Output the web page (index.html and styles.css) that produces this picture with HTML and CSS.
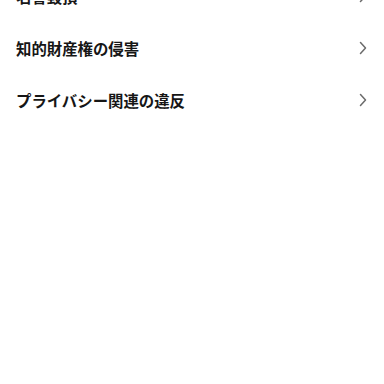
FILE: index.html
```html
<!DOCTYPE html>
<html lang="ja">
<head>
<meta charset="utf-8">
<link rel="stylesheet" href="styles.css">
</head>
<body>
<ul class="list">
  <li class="row"><span class="label">名誉毀損</span><svg class="chev" viewBox="0 0 8 14" width="8" height="14"><path d="M1.5 1.5 L6.5 7 L1.5 12.5" fill="none" stroke="#6b6b6b" stroke-width="1.5" stroke-linecap="round" stroke-linejoin="round"/></svg></li>
  <li class="row"><span class="label">知的財産権の侵害</span><svg class="chev" viewBox="0 0 8 14" width="8" height="14"><path d="M1.5 1.5 L6.5 7 L1.5 12.5" fill="none" stroke="#6b6b6b" stroke-width="1.5" stroke-linecap="round" stroke-linejoin="round"/></svg></li>
  <li class="row"><span class="label">プライバシー関連の違反</span><svg class="chev" viewBox="0 0 8 14" width="8" height="14"><path d="M1.5 1.5 L6.5 7 L1.5 12.5" fill="none" stroke="#6b6b6b" stroke-width="1.5" stroke-linecap="round" stroke-linejoin="round"/></svg></li>
</ul>
</body>
</html>
```
FILE: styles.css
```css
html, body {
  margin: 0;
  padding: 0;
  background: #ffffff;
  width: 384px;
  height: 384px;
  overflow: hidden;
}
.list {
  list-style: none;
  margin: -30px 0 0 0;
  padding: 0;
}
.row {
  height: 52px;
  display: flex;
  align-items: center;
  justify-content: space-between;
  padding: 0 17px 0 16px;
}
.label {
  font-family: "Noto Sans CJK JP", "Noto Sans", sans-serif;
  font-weight: 700;
  font-size: 15.4px;
  color: #161616;
  line-height: 20px;
}
.chev {
  display: block;
}
```
